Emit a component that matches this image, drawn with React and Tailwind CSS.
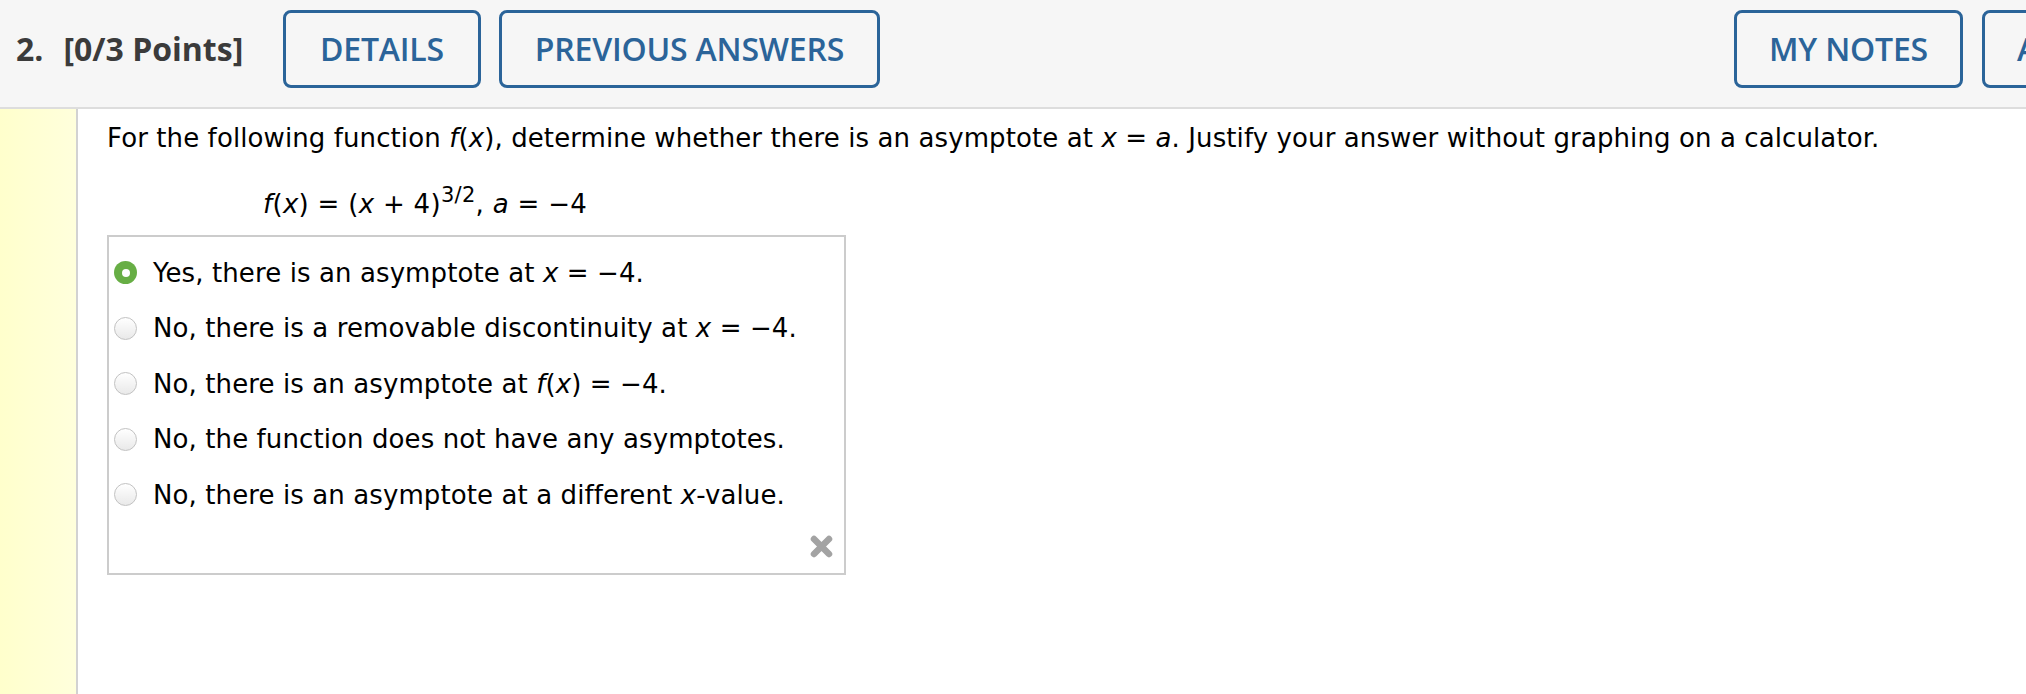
import React from "react";

const I = ({ children }) => <span className="italic">{children}</span>;

function Radio({ selected }) {
  if (selected) {
    return (
      <span className="shrink-0 w-[23px] h-[23px] rounded-full bg-[#67ae45] flex items-center justify-center">
        <span className="w-[8px] h-[8px] rounded-full bg-white" />
      </span>
    );
  }
  return (
    <span className="shrink-0 w-[23px] h-[23px] rounded-full border border-[#c2c2c2] bg-gradient-to-b from-[#ffffff] to-[#e9e9e9]" />
  );
}

function Option({ selected, children }) {
  return (
    <div className="h-[55.5px] flex items-center pl-[5px]">
      <Radio selected={selected} />
      <span className="ml-[16px] text-[26px] leading-[34px] tracking-[0.1px] text-black whitespace-nowrap">{children}</span>
    </div>
  );
}

function NavButton({ children, className = "" }) {
  return (
    <div
      className={
        "shrink-0 h-[78px] border-[3px] border-[#2b6499] rounded-[8px] flex items-center text-[#2b6499] font-['Open_Sans',sans-serif] font-semibold text-[32px] tracking-[-0.2px] whitespace-nowrap " +
        className
      }
    >
      {children}
    </div>
  );
}

export default function App() {
  return (
    <div className="w-[2026px] h-[694px] overflow-hidden bg-white flex flex-col font-['DejaVu_Sans',sans-serif]">
      <header className="h-[109px] shrink-0 bg-[#f6f6f6] border-b-2 border-[#dddddd] flex items-start pt-[10px] overflow-hidden">
        <div className="w-[283px] shrink-0 h-[78px] flex items-center pl-[16px] font-['Open_Sans',sans-serif] font-bold text-[32px] text-[#3b3b3b] whitespace-nowrap">
          <span>2.</span>
          <span className="ml-[20px]">[0/3 Points]</span>
        </div>
        <NavButton className="w-[198px] justify-center">DETAILS</NavButton>
        <NavButton className="ml-[18px] w-[381px] justify-center">PREVIOUS ANSWERS</NavButton>
        <NavButton className="ml-[854px] w-[229px] justify-center">MY NOTES</NavButton>
        <NavButton className="ml-[19px] w-[380px] justify-start pl-[32px]">ASK YOUR TEACHER</NavButton>
      </header>
      <div className="flex-1 flex">
        <div className="w-[78px] shrink-0 bg-gradient-to-r from-[#ffffcc] to-[#ffffdc] border-r-2 border-[#d2d2d2]" />
        <div className="flex-1 pl-[29px] pt-[12px]">
          <p className="text-[26px] leading-[34px] tracking-[0.1px] text-black whitespace-nowrap">
            For the following function <I>f</I>(<I>x</I>), determine whether there is an asymptote at <I>x</I> = <I>a</I>. Justify your answer without graphing on a calculator.
          </p>
          <div className="mt-[32px] ml-[156px] h-[34px] text-[26px] leading-[34px] tracking-[0.3px] text-black whitespace-nowrap">
            <I>f</I>(<I>x</I>) = (<I>x</I> + 4)
            <span className="text-[21px] leading-none relative -top-[11px]">3/2</span>, <I>a</I> = −4
          </div>
          <div className="mt-[14px] w-[739px] border-2 border-[#cccccc] pt-[8px] pb-[14px]">
            <Option selected>
              Yes, there is an asymptote at <I>x</I> = −4.
            </Option>
            <Option>
              No, there is a removable discontinuity at <I>x</I> = −4.
            </Option>
            <Option>
              No, there is an asymptote at <I>f</I>(<I>x</I>) = −4.
            </Option>
            <Option>No, the function does not have any asymptotes.</Option>
            <Option>
              No, there is an asymptote at a different <I>x</I>-value.
            </Option>
            <div className="mt-[11px] flex justify-end pr-[9px]">
              <svg width="27" height="25" viewBox="0 0 27 25" className="blur-[0.6px]">
                <path d="M6 5 L21 20 M21 5 L6 20" stroke="#a3a3a3" strokeWidth="6.5" strokeLinecap="round" />
              </svg>
            </div>
          </div>
        </div>
      </div>
    </div>
  );
}
